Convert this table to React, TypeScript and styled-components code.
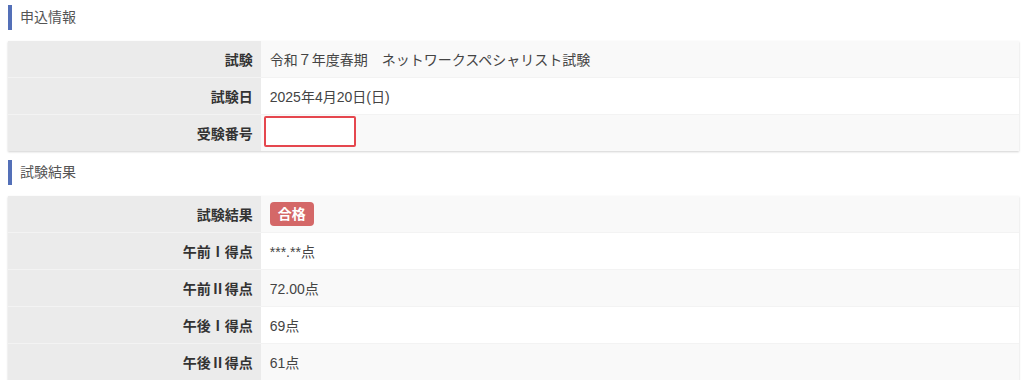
import * as React from 'react'
import styled, { createGlobalStyle } from 'styled-components'

const GlobalStyle = createGlobalStyle`
  body {
    margin: 0;
    background: #fff;
    font-family: "Liberation Sans", "Noto Sans CJK JP", sans-serif;
    font-size: 14px;
    color: #333;
  }
`

const Page = styled.div`
  padding: 5px 5px 0 8px;
`

const Heading = styled.h3`
  margin: 0 0 11px;
  height: 25px;
  line-height: 25px;
  padding-left: 8px;
  border-left: 4px solid #5470b8;
  font-size: 14px;
  font-weight: normal;
  color: #555;

  table + & {
    margin-top: 9px;
  }
`

const Table = styled.table`
  width: 100%;
  border-collapse: collapse;
  box-shadow: 0 1px 2px rgba(0, 0, 0, 0.18);

  tr + tr > td, tr + tr > th {
    border-top: 1px solid #f3f3f3;
  }
`

const Label = styled.th`
  width: 25%;
  height: 36px;
  padding: 0 8px 0 0;
  text-align: right;
  font-family: "Noto Sans CJK JP", sans-serif;
  font-weight: bold;
  color: #333;
  background: #ebebeb;
`

const Value = styled.td<{ $odd: boolean, $input: boolean }>`
  box-sizing: border-box;
  height: 36px;
  padding: ${ p => p.$input ? '1px 0 4px 3px' : '0 0 0 9px' };
  vertical-align: ${ p => p.$input ? 'top' : 'middle' };
  color: #444;
  background: ${ p => p.$odd ? '#f9f9f9' : '#fff' };
`

const Input = styled.input`
  display: block;
  box-sizing: border-box;
  width: 92px;
  height: 31px;
  margin: 0;
  border: 2px solid #e5474e;
  border-radius: 2px;
  background: #fff;
  outline: none;
`

const Badge = styled.span`
  display: inline-block;
  padding: 0 8px;
  height: 24px;
  line-height: 24px;
  border-radius: 4px;
  background: #d46868;
  color: #fff;
  font-weight: bold;
`

interface Row {
  label: string,
  value: React.ReactNode,
  input?: boolean
}

const applyRows: Array<Row> = [
  { label: '試験', value: '令和７年度春期　ネットワークスペシャリスト試験' },
  { label: '試験日', value: '2025年4月20日(日)' },
  { label: '受験番号', value: <Input type='text' />, input: true },
]

const resultRows: Array<Row> = [
  { label: '試験結果', value: <Badge>合格</Badge> },
  { label: '午前Ⅰ得点', value: '***.**点' },
  { label: '午前Ⅱ得点', value: '72.00点' },
  { label: '午後Ⅰ得点', value: '69点' },
  { label: '午後Ⅱ得点', value: '61点' },
]

const Section = ({ title, rows }: { title: string, rows: Array<Row> }) => (
  <>
    <Heading>{ title }</Heading>
    <Table>
      <tbody>
        {rows.map((row, i) => (
          <tr key={ row.label }>
            <Label>{ row.label }</Label>
            <Value $odd={ i % 2 === 0 } $input={ !!row.input }>{ row.value }</Value>
          </tr>
        ))}
      </tbody>
    </Table>
  </>
)

export default function App() {
  return (
    <Page>
      <GlobalStyle />
      <Section title='申込情報' rows={ applyRows } />
      <Section title='試験結果' rows={ resultRows } />
    </Page>
  )
}
